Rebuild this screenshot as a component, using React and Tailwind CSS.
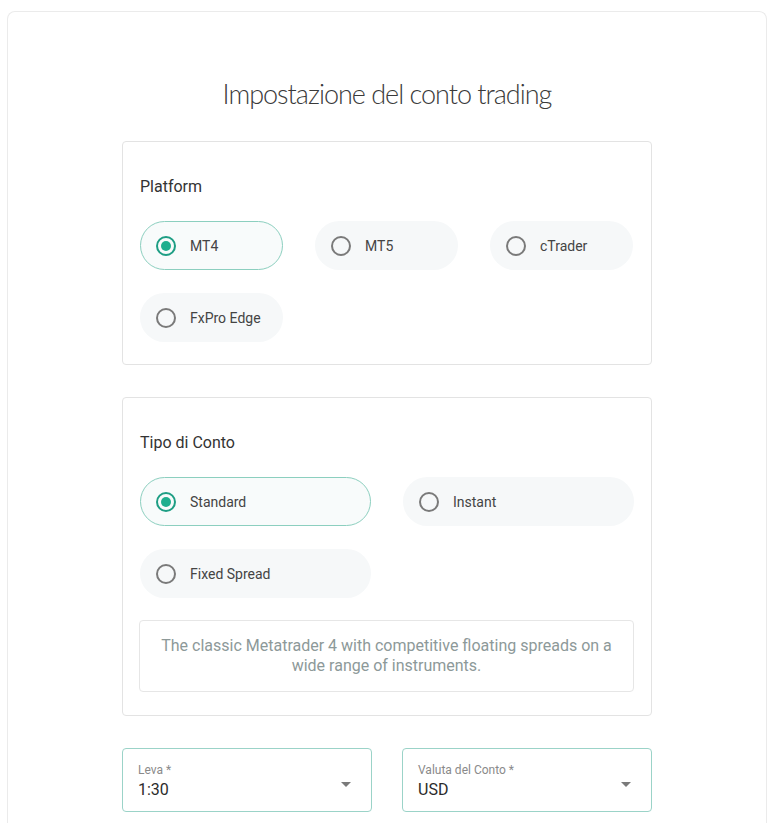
const piattaforme = ['MT4', 'MT5', 'cTrader', 'FxPro Edge'];
const tipiConto = ['Standard', 'Instant', 'Fixed Spread'];

/**
 * Pillola radio.
 * @param {{ label: string, checked: boolean }} props
 */
function RadioPill({ label, checked }) {
    return (
        <label
            className={`flex h-[49px] cursor-pointer items-center gap-[14px] rounded-full border pl-[15px] pt-px ${
                checked ? 'border-[#8ccfbf] bg-[#f8fbfb]' : 'border-transparent bg-[#f6f8f9]'
            }`}
        >
            <span
                className={`flex h-[20px] w-[20px] items-center justify-center rounded-full border-2 ${
                    checked ? 'border-[#1e9e84]' : 'border-[#7a7a7a]'
                }`}
            >
                {checked && <span className="h-[10px] w-[10px] rounded-full bg-[#1fae8e]"></span>}
            </span>
            <span className="text-[14px] text-[#444]">{label}</span>
        </label>
    );
}

/**
 * Select stile material.
 * @param {{ label: string, value: string }} props
 */
function CampoSelect({ label, value }) {
    return (
        <div className="relative h-[64px] rounded-[4px] border border-[#9bd3c8] bg-white pl-[15px] pt-[13px]">
            <div className="text-[12px] leading-[16px] text-[#8a8a8a]">{label}</div>
            <div className="mt-[2px] text-[16px] leading-[20px] text-[#2b2b2b]">{value}</div>
            <svg className="absolute right-[20px] top-[33px]" width="10" height="5" viewBox="0 0 10 5">
                <path d="M0 0h10L5 5z" fill="#7a7a7a" />
            </svg>
        </div>
    );
}

export default function App() {
    return (
        <div className="min-h-[823px] bg-white pt-[11px] font-['Roboto',sans-serif]">
            <div className="ml-[7px] w-[760px] rounded-t-[8px] border border-b-0 border-[#ebebeb] pb-[20px]">
                <h1 className="pt-[64px] text-center font-['Lato',sans-serif] text-[27px] font-light leading-[36px] tracking-[-1px] text-[#3a3a3a]">
                    Impostazione del conto trading
                </h1>

                <div className="mx-auto mt-[29px] w-[530px]">
                    <section className="rounded-[4px] border border-[#e3e3e3] pb-[22px] pl-[17px] pr-[18px] pt-[33px]">
                        <h2 className="text-[16px] leading-[24px] text-[#333]">Platform</h2>
                        <div className="mt-[22px] grid grid-cols-3 gap-x-[32px] gap-y-[23px]">
                            {piattaforme.map((p) => (
                                <RadioPill key={p} label={p} checked={p === 'MT4'} />
                            ))}
                        </div>
                    </section>

                    <section className="mt-[32px] rounded-[4px] border border-[#e3e3e3] pb-[23px] pl-[17px] pr-[17px] pt-[33px]">
                        <h2 className="text-[16px] leading-[24px] text-[#333]">Tipo di Conto</h2>
                        <div className="mt-[22px] grid grid-cols-2 gap-x-[32px] gap-y-[23px]">
                            {tipiConto.map((t) => (
                                <RadioPill key={t} label={t} checked={t === 'Standard'} />
                            ))}
                        </div>
                        <div className="-ml-px mt-[22px] rounded-[4px] border border-[#e6e6e6] px-[16px] py-[15px] text-center text-[16px] leading-[20px] text-[#8d9999]">
                            The classic Metatrader 4 with competitive floating spreads on a wide range of instruments.
                        </div>
                    </section>

                    <div className="mt-[32px] grid grid-cols-2 gap-x-[30px]">
                        <CampoSelect label="Leva *" value="1:30" />
                        <CampoSelect label="Valuta del Conto *" value="USD" />
                    </div>
                </div>
            </div>
        </div>
    );
}
